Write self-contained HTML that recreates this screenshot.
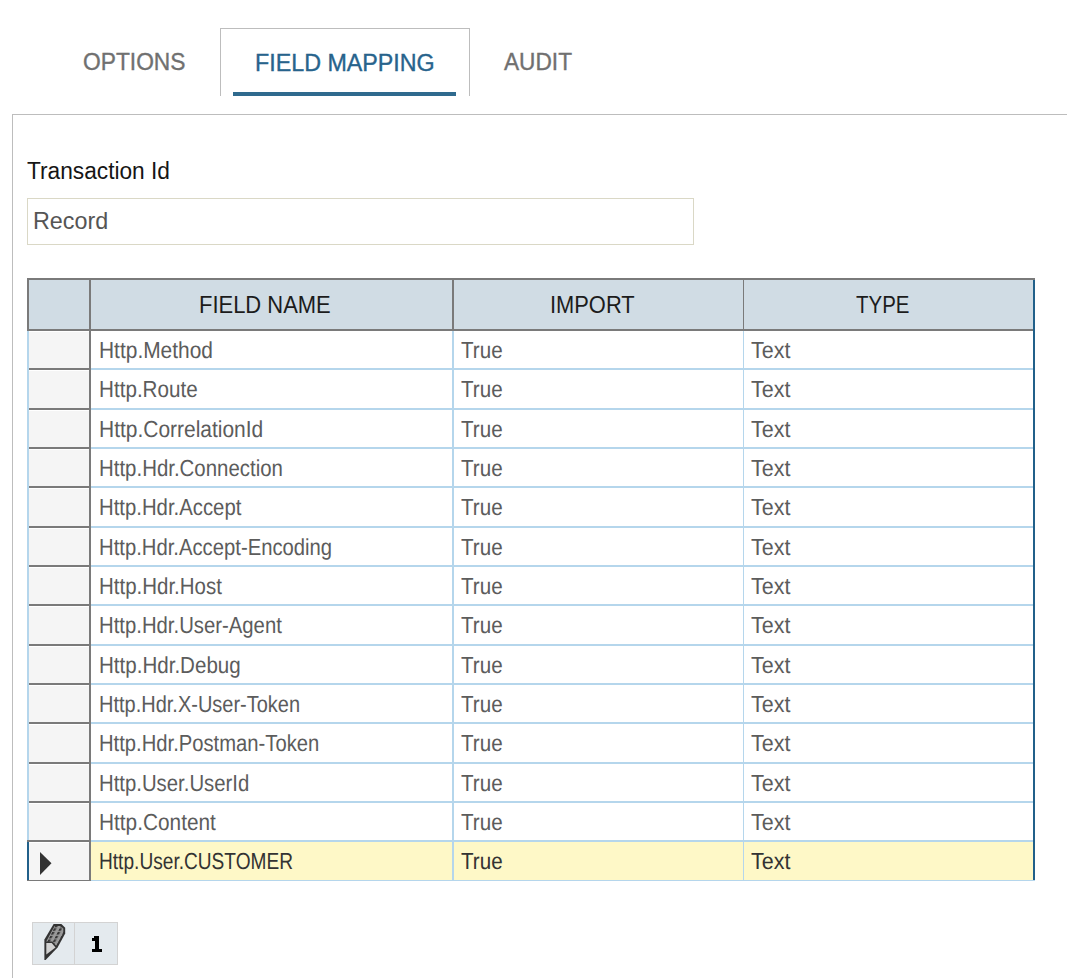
<!DOCTYPE html>
<html><head><meta charset="utf-8"><style>
html,body{margin:0;padding:0;background:#fff;}
body{width:1067px;height:978px;position:relative;overflow:hidden;font-family:"Liberation Sans", sans-serif;}
.t{position:absolute;white-space:nowrap;transform-origin:0 0;}
</style></head><body>
<div style="position:absolute;left:220px;top:28px;width:248px;height:67px;border:1px solid #bdbdbd;border-bottom:none;background:#fff"></div>
<div style="position:absolute;left:233px;top:92px;width:223px;height:4px;background:#2f6a8e"></div>
<div style="position:absolute;left:12px;top:114px;width:1100px;height:900px;border-left:1px solid #bdbdbd;border-top:1px solid #bdbdbd"></div>
<div style="position:absolute;left:27px;top:198px;width:665px;height:45px;border:1px solid #dad8c6;background:#fff"></div>
<div style="position:absolute;left:27px;top:278px;width:1008px;height:53px;background:#d0dce4"></div><div style="position:absolute;left:27px;top:278px;width:1008px;height:2px;background:#7a7a7a"></div><div style="position:absolute;left:27px;top:329px;width:1008px;height:2px;background:#7a7a7a"></div><div style="position:absolute;left:27px;top:278px;width:2px;height:53px;background:#7a7a7a"></div><div style="position:absolute;left:89px;top:278px;width:2px;height:53px;background:#7a7a7a"></div><div style="position:absolute;left:452px;top:278px;width:2px;height:53px;background:#7a7a7a"></div><div style="position:absolute;left:743px;top:278px;width:1px;height:53px;background:#7a7a7a"></div><div style="position:absolute;left:1033px;top:278px;width:2px;height:2px;background:#7a7a7a"></div><div style="position:absolute;left:29px;top:331px;width:1004px;height:37px;background:#ffffff"></div><div style="position:absolute;left:29px;top:331px;width:60px;height:37px;background:#f5f5f5;box-shadow:inset 0 1px 0 #fff"></div><div style="position:absolute;left:29px;top:370px;width:1004px;height:38px;background:#ffffff"></div><div style="position:absolute;left:29px;top:370px;width:60px;height:38px;background:#f5f5f5;box-shadow:inset 0 1px 0 #fff"></div><div style="position:absolute;left:29px;top:410px;width:1004px;height:37px;background:#ffffff"></div><div style="position:absolute;left:29px;top:410px;width:60px;height:37px;background:#f5f5f5;box-shadow:inset 0 1px 0 #fff"></div><div style="position:absolute;left:29px;top:449px;width:1004px;height:37px;background:#ffffff"></div><div style="position:absolute;left:29px;top:449px;width:60px;height:37px;background:#f5f5f5;box-shadow:inset 0 1px 0 #fff"></div><div style="position:absolute;left:29px;top:488px;width:1004px;height:38px;background:#ffffff"></div><div style="position:absolute;left:29px;top:488px;width:60px;height:38px;background:#f5f5f5;box-shadow:inset 0 1px 0 #fff"></div><div style="position:absolute;left:29px;top:528px;width:1004px;height:37px;background:#ffffff"></div><div style="position:absolute;left:29px;top:528px;width:60px;height:37px;background:#f5f5f5;box-shadow:inset 0 1px 0 #fff"></div><div style="position:absolute;left:29px;top:567px;width:1004px;height:37px;background:#ffffff"></div><div style="position:absolute;left:29px;top:567px;width:60px;height:37px;background:#f5f5f5;box-shadow:inset 0 1px 0 #fff"></div><div style="position:absolute;left:29px;top:606px;width:1004px;height:38px;background:#ffffff"></div><div style="position:absolute;left:29px;top:606px;width:60px;height:38px;background:#f5f5f5;box-shadow:inset 0 1px 0 #fff"></div><div style="position:absolute;left:29px;top:646px;width:1004px;height:37px;background:#ffffff"></div><div style="position:absolute;left:29px;top:646px;width:60px;height:37px;background:#f5f5f5;box-shadow:inset 0 1px 0 #fff"></div><div style="position:absolute;left:29px;top:685px;width:1004px;height:37px;background:#ffffff"></div><div style="position:absolute;left:29px;top:685px;width:60px;height:37px;background:#f5f5f5;box-shadow:inset 0 1px 0 #fff"></div><div style="position:absolute;left:29px;top:724px;width:1004px;height:38px;background:#ffffff"></div><div style="position:absolute;left:29px;top:724px;width:60px;height:38px;background:#f5f5f5;box-shadow:inset 0 1px 0 #fff"></div><div style="position:absolute;left:29px;top:764px;width:1004px;height:37px;background:#ffffff"></div><div style="position:absolute;left:29px;top:764px;width:60px;height:37px;background:#f5f5f5;box-shadow:inset 0 1px 0 #fff"></div><div style="position:absolute;left:29px;top:803px;width:1004px;height:37px;background:#ffffff"></div><div style="position:absolute;left:29px;top:803px;width:60px;height:37px;background:#f5f5f5;box-shadow:inset 0 1px 0 #fff"></div><div style="position:absolute;left:29px;top:842px;width:1004px;height:38px;background:#fef8c7"></div><div style="position:absolute;left:29px;top:842px;width:60px;height:38px;background:#f5f5f5;box-shadow:inset 0 1px 0 #fff"></div><div style="position:absolute;left:91px;top:368px;width:942px;height:2px;background:#b5d6ec"></div><div style="position:absolute;left:27px;top:368px;width:64px;height:2px;background:#7a7a7a"></div><div style="position:absolute;left:91px;top:408px;width:942px;height:2px;background:#b5d6ec"></div><div style="position:absolute;left:27px;top:408px;width:64px;height:2px;background:#7a7a7a"></div><div style="position:absolute;left:91px;top:447px;width:942px;height:2px;background:#b5d6ec"></div><div style="position:absolute;left:27px;top:447px;width:64px;height:2px;background:#7a7a7a"></div><div style="position:absolute;left:91px;top:486px;width:942px;height:2px;background:#b5d6ec"></div><div style="position:absolute;left:27px;top:486px;width:64px;height:2px;background:#7a7a7a"></div><div style="position:absolute;left:91px;top:526px;width:942px;height:2px;background:#b5d6ec"></div><div style="position:absolute;left:27px;top:526px;width:64px;height:2px;background:#7a7a7a"></div><div style="position:absolute;left:91px;top:565px;width:942px;height:2px;background:#b5d6ec"></div><div style="position:absolute;left:27px;top:565px;width:64px;height:2px;background:#7a7a7a"></div><div style="position:absolute;left:91px;top:604px;width:942px;height:2px;background:#b5d6ec"></div><div style="position:absolute;left:27px;top:604px;width:64px;height:2px;background:#7a7a7a"></div><div style="position:absolute;left:91px;top:644px;width:942px;height:2px;background:#b5d6ec"></div><div style="position:absolute;left:27px;top:644px;width:64px;height:2px;background:#7a7a7a"></div><div style="position:absolute;left:91px;top:683px;width:942px;height:2px;background:#b5d6ec"></div><div style="position:absolute;left:27px;top:683px;width:64px;height:2px;background:#7a7a7a"></div><div style="position:absolute;left:91px;top:722px;width:942px;height:2px;background:#b5d6ec"></div><div style="position:absolute;left:27px;top:722px;width:64px;height:2px;background:#7a7a7a"></div><div style="position:absolute;left:91px;top:762px;width:942px;height:2px;background:#b5d6ec"></div><div style="position:absolute;left:27px;top:762px;width:64px;height:2px;background:#7a7a7a"></div><div style="position:absolute;left:91px;top:801px;width:942px;height:2px;background:#b5d6ec"></div><div style="position:absolute;left:27px;top:801px;width:64px;height:2px;background:#7a7a7a"></div><div style="position:absolute;left:91px;top:840px;width:942px;height:2px;background:#b5d6ec"></div><div style="position:absolute;left:27px;top:840px;width:64px;height:2px;background:#7a7a7a"></div><div style="position:absolute;left:91px;top:880px;width:944px;height:1px;background:#b5d6ec"></div><div style="position:absolute;left:27px;top:880px;width:64px;height:1px;background:#7a7a7a"></div><div style="position:absolute;left:27px;top:331px;width:2px;height:509px;background:#b5d6ec"></div><div style="position:absolute;left:27px;top:842px;width:2px;height:38px;background:#21608a"></div><div style="position:absolute;left:89px;top:331px;width:2px;height:550px;background:#7a7a7a"></div><div style="position:absolute;left:452px;top:331px;width:2px;height:549px;background:#b5d6ec"></div><div style="position:absolute;left:743px;top:331px;width:1px;height:549px;background:#b5d6ec"></div><div style="position:absolute;left:1033px;top:280px;width:2px;height:600px;background:#21608a"></div><svg style="position:absolute;left:39px;top:851px" width="14" height="26" viewBox="0 0 14 26"><polygon points="1,1 12.5,12.3 1,24" fill="#333"/></svg>
<div style="position:absolute;left:32px;top:922px;width:84px;height:41px;border:1px solid #d3d3d3;background:#e4eaee"></div>
<div style="position:absolute;left:74px;top:923px;width:1px;height:41px;background:#d3d3d3"></div>
<svg style="position:absolute;left:40px;top:920px" width="30" height="44" viewBox="0 0 30 44">
<defs><pattern id="dots" x="1.4" y="0.97" width="5.6" height="3.7" patternUnits="userSpaceOnUse" patternTransform="skewX(-26.57)"><rect width="5.6" height="3.7" fill="#999"/><rect x="0" y="0" width="2.4" height="2.6" fill="#363636"/></pattern></defs>
<polygon points="4.4,19.6 13.6,4 21.4,4 25.2,7.8 25.2,13.6 17.6,27.4 5.6,40 4.4,40" fill="#333"/>
<polygon points="6.2,21.4 14.6,5.9 20.6,5.9 23.3,8.6 23.3,13.2 16.2,25.8 12.4,21.4" fill="url(#dots)"/>
<polygon points="6.3,23 11.7,23 15.5,27.6 6.3,34.4" fill="#d2d2d2"/>
</svg>
<svg style="position:absolute;left:90px;top:934px" width="14" height="20" viewBox="0 0 14 20" shape-rendering="crispEdges"><rect x="5" y="2" width="4" height="15" fill="#000"/><rect x="4" y="2" width="1" height="2" fill="#000"/><rect x="2" y="4" width="3" height="3" fill="#000"/><rect x="2" y="15" width="10" height="3" fill="#000"/></svg>
<div class="t" style="left:83.31px;top:51.00px;font-size:23px;line-height:23px;color:#707070;font-weight:400;transform:scaleX(0.9902);-webkit-text-stroke:0.35px #707070">OPTIONS</div><div class="t" style="left:255.28px;top:52.00px;font-size:23px;line-height:23px;color:#27638c;font-weight:400;transform:scaleX(1.0115);-webkit-text-stroke:0.35px #27638c">FIELD MAPPING</div><div class="t" style="left:504.30px;top:51.00px;font-size:23px;line-height:23px;color:#707070;font-weight:400;transform:scaleX(0.9855);-webkit-text-stroke:0.35px #707070">AUDIT</div><div class="t" style="left:27.03px;top:160.00px;font-size:23.5px;line-height:23.5px;color:#151515;font-weight:400;transform:scaleX(0.9658)">Transaction Id</div><div class="t" style="left:33.05px;top:209.00px;font-size:24px;line-height:24px;color:#555555;font-weight:400;transform:scaleX(0.9730)">Record</div><div class="t" style="left:198.57px;top:293.00px;font-size:24px;line-height:24px;color:#1c1c1c;font-weight:400;transform:scaleX(0.9149)">FIELD NAME</div><div class="t" style="left:550.48px;top:293.00px;font-size:24px;line-height:24px;color:#1c1c1c;font-weight:400;transform:scaleX(0.9111)">IMPORT</div><div class="t" style="left:855.75px;top:293.00px;font-size:24px;line-height:24px;color:#1c1c1c;font-weight:400;transform:scaleX(0.8525)">TYPE</div><div class="t" style="left:98.60px;top:339.00px;font-size:23.2px;line-height:23.2px;color:#5c5c5c;font-weight:400;transform:scaleX(0.9024);text-rendering:geometricPrecision">Http.Method</div><div class="t" style="left:460.71px;top:339.00px;font-size:23.2px;line-height:23.2px;color:#5c5c5c;font-weight:400;transform:scaleX(0.8889);text-rendering:geometricPrecision">True</div><div class="t" style="left:751.47px;top:339.00px;font-size:23.2px;line-height:23.2px;color:#5c5c5c;font-weight:400;transform:scaleX(0.9268);text-rendering:geometricPrecision">Text</div><div class="t" style="left:98.62px;top:378.00px;font-size:23.2px;line-height:23.2px;color:#5c5c5c;font-weight:400;transform:scaleX(0.8907);text-rendering:geometricPrecision">Http.Route</div><div class="t" style="left:460.71px;top:378.00px;font-size:23.2px;line-height:23.2px;color:#5c5c5c;font-weight:400;transform:scaleX(0.8889);text-rendering:geometricPrecision">True</div><div class="t" style="left:751.47px;top:378.00px;font-size:23.2px;line-height:23.2px;color:#5c5c5c;font-weight:400;transform:scaleX(0.9268);text-rendering:geometricPrecision">Text</div><div class="t" style="left:98.59px;top:418.00px;font-size:23.2px;line-height:23.2px;color:#5c5c5c;font-weight:400;transform:scaleX(0.9039);text-rendering:geometricPrecision">Http.CorrelationId</div><div class="t" style="left:460.71px;top:418.00px;font-size:23.2px;line-height:23.2px;color:#5c5c5c;font-weight:400;transform:scaleX(0.8889);text-rendering:geometricPrecision">True</div><div class="t" style="left:751.47px;top:418.00px;font-size:23.2px;line-height:23.2px;color:#5c5c5c;font-weight:400;transform:scaleX(0.9268);text-rendering:geometricPrecision">Text</div><div class="t" style="left:98.64px;top:457.00px;font-size:23.2px;line-height:23.2px;color:#5c5c5c;font-weight:400;transform:scaleX(0.8810);text-rendering:geometricPrecision">Http.Hdr.Connection</div><div class="t" style="left:460.71px;top:457.00px;font-size:23.2px;line-height:23.2px;color:#5c5c5c;font-weight:400;transform:scaleX(0.8889);text-rendering:geometricPrecision">True</div><div class="t" style="left:751.47px;top:457.00px;font-size:23.2px;line-height:23.2px;color:#5c5c5c;font-weight:400;transform:scaleX(0.9268);text-rendering:geometricPrecision">Text</div><div class="t" style="left:98.65px;top:496.00px;font-size:23.2px;line-height:23.2px;color:#5c5c5c;font-weight:400;transform:scaleX(0.8769);text-rendering:geometricPrecision">Http.Hdr.Accept</div><div class="t" style="left:460.71px;top:496.00px;font-size:23.2px;line-height:23.2px;color:#5c5c5c;font-weight:400;transform:scaleX(0.8889);text-rendering:geometricPrecision">True</div><div class="t" style="left:751.47px;top:496.00px;font-size:23.2px;line-height:23.2px;color:#5c5c5c;font-weight:400;transform:scaleX(0.9268);text-rendering:geometricPrecision">Text</div><div class="t" style="left:98.65px;top:536.00px;font-size:23.2px;line-height:23.2px;color:#5c5c5c;font-weight:400;transform:scaleX(0.8738);text-rendering:geometricPrecision">Http.Hdr.Accept-Encoding</div><div class="t" style="left:460.71px;top:536.00px;font-size:23.2px;line-height:23.2px;color:#5c5c5c;font-weight:400;transform:scaleX(0.8889);text-rendering:geometricPrecision">True</div><div class="t" style="left:751.47px;top:536.00px;font-size:23.2px;line-height:23.2px;color:#5c5c5c;font-weight:400;transform:scaleX(0.9268);text-rendering:geometricPrecision">Text</div><div class="t" style="left:98.63px;top:575.00px;font-size:23.2px;line-height:23.2px;color:#5c5c5c;font-weight:400;transform:scaleX(0.8832);text-rendering:geometricPrecision">Http.Hdr.Host</div><div class="t" style="left:460.71px;top:575.00px;font-size:23.2px;line-height:23.2px;color:#5c5c5c;font-weight:400;transform:scaleX(0.8889);text-rendering:geometricPrecision">True</div><div class="t" style="left:751.47px;top:575.00px;font-size:23.2px;line-height:23.2px;color:#5c5c5c;font-weight:400;transform:scaleX(0.9268);text-rendering:geometricPrecision">Text</div><div class="t" style="left:98.65px;top:614.00px;font-size:23.2px;line-height:23.2px;color:#5c5c5c;font-weight:400;transform:scaleX(0.8758);text-rendering:geometricPrecision">Http.Hdr.User-Agent</div><div class="t" style="left:460.71px;top:614.00px;font-size:23.2px;line-height:23.2px;color:#5c5c5c;font-weight:400;transform:scaleX(0.8889);text-rendering:geometricPrecision">True</div><div class="t" style="left:751.47px;top:614.00px;font-size:23.2px;line-height:23.2px;color:#5c5c5c;font-weight:400;transform:scaleX(0.9268);text-rendering:geometricPrecision">Text</div><div class="t" style="left:98.63px;top:654.00px;font-size:23.2px;line-height:23.2px;color:#5c5c5c;font-weight:400;transform:scaleX(0.8865);text-rendering:geometricPrecision">Http.Hdr.Debug</div><div class="t" style="left:460.71px;top:654.00px;font-size:23.2px;line-height:23.2px;color:#5c5c5c;font-weight:400;transform:scaleX(0.8889);text-rendering:geometricPrecision">True</div><div class="t" style="left:751.47px;top:654.00px;font-size:23.2px;line-height:23.2px;color:#5c5c5c;font-weight:400;transform:scaleX(0.9268);text-rendering:geometricPrecision">Text</div><div class="t" style="left:98.68px;top:693.00px;font-size:23.2px;line-height:23.2px;color:#5c5c5c;font-weight:400;transform:scaleX(0.8622);text-rendering:geometricPrecision">Http.Hdr.X-User-Token</div><div class="t" style="left:460.71px;top:693.00px;font-size:23.2px;line-height:23.2px;color:#5c5c5c;font-weight:400;transform:scaleX(0.8889);text-rendering:geometricPrecision">True</div><div class="t" style="left:751.47px;top:693.00px;font-size:23.2px;line-height:23.2px;color:#5c5c5c;font-weight:400;transform:scaleX(0.9268);text-rendering:geometricPrecision">Text</div><div class="t" style="left:98.66px;top:732.00px;font-size:23.2px;line-height:23.2px;color:#5c5c5c;font-weight:400;transform:scaleX(0.8719);text-rendering:geometricPrecision">Http.Hdr.Postman-Token</div><div class="t" style="left:460.71px;top:732.00px;font-size:23.2px;line-height:23.2px;color:#5c5c5c;font-weight:400;transform:scaleX(0.8889);text-rendering:geometricPrecision">True</div><div class="t" style="left:751.47px;top:732.00px;font-size:23.2px;line-height:23.2px;color:#5c5c5c;font-weight:400;transform:scaleX(0.9268);text-rendering:geometricPrecision">Text</div><div class="t" style="left:98.65px;top:772.00px;font-size:23.2px;line-height:23.2px;color:#5c5c5c;font-weight:400;transform:scaleX(0.8768);text-rendering:geometricPrecision">Http.User.UserId</div><div class="t" style="left:460.71px;top:772.00px;font-size:23.2px;line-height:23.2px;color:#5c5c5c;font-weight:400;transform:scaleX(0.8889);text-rendering:geometricPrecision">True</div><div class="t" style="left:751.47px;top:772.00px;font-size:23.2px;line-height:23.2px;color:#5c5c5c;font-weight:400;transform:scaleX(0.9268);text-rendering:geometricPrecision">Text</div><div class="t" style="left:98.60px;top:811.00px;font-size:23.2px;line-height:23.2px;color:#5c5c5c;font-weight:400;transform:scaleX(0.8977);text-rendering:geometricPrecision">Http.Content</div><div class="t" style="left:460.71px;top:811.00px;font-size:23.2px;line-height:23.2px;color:#5c5c5c;font-weight:400;transform:scaleX(0.8889);text-rendering:geometricPrecision">True</div><div class="t" style="left:751.47px;top:811.00px;font-size:23.2px;line-height:23.2px;color:#5c5c5c;font-weight:400;transform:scaleX(0.9268);text-rendering:geometricPrecision">Text</div><div class="t" style="left:98.75px;top:850.00px;font-size:23.2px;line-height:23.2px;color:#333333;font-weight:400;transform:scaleX(0.8246);text-rendering:geometricPrecision">Http.User.CUSTOMER</div><div class="t" style="left:460.71px;top:850.00px;font-size:23.2px;line-height:23.2px;color:#333333;font-weight:400;transform:scaleX(0.8889);text-rendering:geometricPrecision">True</div><div class="t" style="left:751.47px;top:850.00px;font-size:23.2px;line-height:23.2px;color:#333333;font-weight:400;transform:scaleX(0.9268);text-rendering:geometricPrecision">Text</div>
</body></html>
